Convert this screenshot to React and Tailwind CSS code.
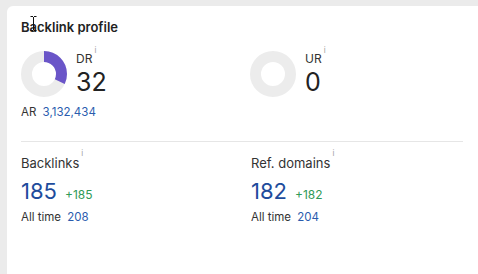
import React from "react";

function Donut({ pct, color }) {
  const r = 17.5;
  const c = 2 * Math.PI * r;
  return (
    <svg width="46" height="46" viewBox="0 0 46 46" className="shrink-0">
      <circle cx="23" cy="23" r={r} fill="none" stroke="#ececec" strokeWidth="11" />
      {pct > 0 && (
        <circle
          cx="23"
          cy="23"
          r={r}
          fill="none"
          stroke={color}
          strokeWidth="11"
          strokeDasharray={`${(c * pct) / 100} ${c}`}
          transform="rotate(-90 23 23)"
        />
      )}
    </svg>
  );
}

function Info() {
  return <sup className="ml-[2px] text-[8px] text-[#a0a0a0] align-top relative top-[-2px]">i</sup>;
}

function Rating({ label, value, pct }) {
  return (
    <div className="flex items-center gap-[9px]">
      <Donut pct={pct} color="#6a55c8" />
      <div className="flex flex-col">
        <div className="text-[12px] leading-[14px] text-[#333]">
          {label}
          <Info />
        </div>
        <div className="text-[25px] leading-[28px] text-[#222] mt-[2px]">{value}</div>
      </div>
    </div>
  );
}

function Metric({ label, value, delta, all }) {
  return (
    <div className="flex flex-col">
      <div className="text-[13px] leading-[16px] text-[#333]">
        {label}
        <Info />
      </div>
      <div className="flex items-baseline gap-[8px] mt-[8px]">
        <span className="text-[22px] leading-[24px] text-[#1e4c9c]">{value}</span>
        <span className="text-[12px] text-[#2f9a58]">{delta}</span>
      </div>
      <div className="text-[11.5px] leading-[14px] text-[#333] mt-[6px]">
        All time <span className="ml-[3px] text-[#2a5cae]">{all}</span>
      </div>
    </div>
  );
}

export default function App() {
  return (
    <div
      className="w-[478px] h-[274px] bg-[#ebebeb] pt-[6px] pl-[7px] overflow-hidden relative"
      style={{ fontFamily: "Inter, 'Noto Sans', sans-serif" }}
    >
      <div className="bg-white h-full rounded-tl-[6px] pl-[14px] pt-[13px] pr-[15px]">
        <div className="text-[13px] leading-[16px] font-semibold text-[#222]">
          Backlink profile
        </div>
        <div className="grid grid-cols-[229px_1fr] mt-[16px]">
          <div className="flex flex-col">
            <Rating label="DR" value="32" pct={32} />
            <div className="text-[11.5px] leading-[14px] text-[#333] mt-[8px]">
              AR <span className="ml-[3px] text-[#2a5cae]">3,132,434</span>
            </div>
          </div>
          <div>
            <Rating label="UR" value="0" pct={0} />
          </div>
        </div>
        <div className="h-px bg-[#e6e6e6] mt-[22px]" />
        <div className="grid grid-cols-[230px_1fr] mt-[13px]">
          <Metric label="Backlinks" value="185" delta="+185" all="208" />
          <Metric label="Ref. domains" value="182" delta="+182" all="204" />
        </div>
      </div>
      <svg className="absolute left-[30px] top-[16px]" width="7" height="15" viewBox="0 0 7 15">
        <path d="M0.5 0.5h2.5M4 0.5h2.5M3.5 1v13M0.5 14.5h2.5M4 14.5h2.5" stroke="#111" strokeWidth="1" fill="none" />
      </svg>
    </div>
  );
}
